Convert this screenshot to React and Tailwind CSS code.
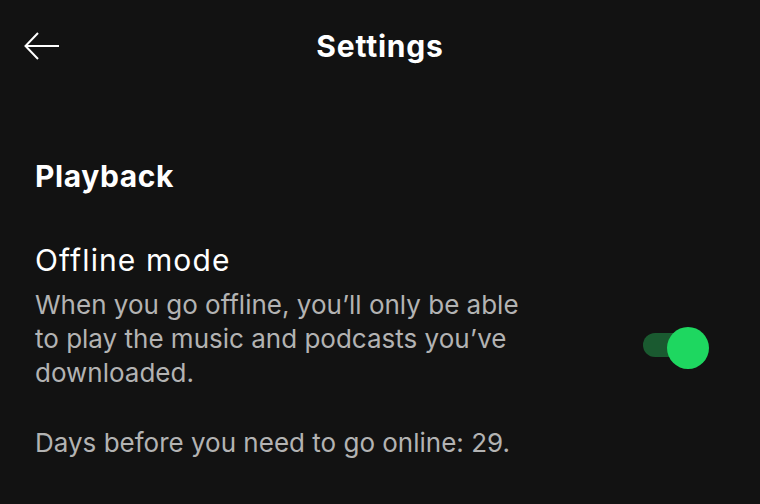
import { useState } from "react";

const BackArrow = () => (
  <svg width="36" height="28" viewBox="0 0 36 28" fill="none" stroke="white" strokeWidth="2">
    <path d="M35 14H2" />
    <path d="M14 1L1.5 14L14 27" />
  </svg>
);

const Toggle = ({ on, onChange }) => (
  <button
    onClick={() => onChange(!on)}
    className="relative w-[68px] h-[44px] -mt-[4px] flex items-center shrink-0"
  >
    <span className="absolute left-[2px] right-[8px] top-[7px] h-[24px] rounded-full bg-[#1a5a30]" />
    <span
      className={
        "absolute top-[1px] w-[42px] h-[42px] rounded-full bg-[#1ed760] " +
        (on ? "right-0" : "left-0")
      }
    />
  </button>
);

export default function App() {
  const [offline, setOffline] = useState(true);

  return (
    <div
      className="w-[760px] h-[504px] bg-[#121212] text-white overflow-hidden"
      style={{ fontFamily: "Inter, 'Noto Sans', sans-serif" }}
    >
      {/* header */}
      <div className="relative h-[92px] flex items-center justify-center">
        <button className="absolute left-[24px] top-[32px]">
          <BackArrow />
        </button>
        <h1 className="text-[30px] leading-[40px] font-bold tracking-[0.8px]">Settings</h1>
      </div>

      <div className="px-[35px] pt-[64px]">
        <h2 className="text-[30px] leading-[40px] font-bold tracking-[0.6px]">Playback</h2>

        <div className="mt-[44px] flex items-center justify-between pr-[16px]">
          <div>
            <div className="text-[30px] leading-[40px] tracking-[1.1px]">Offline mode</div>
            <p className="mt-[8px] w-[505px] text-[26px] leading-[34px] text-[#b3b3b3]">
              When you go offline, you’ll only be able to play the music and podcasts you’ve downloaded.
            </p>
            <p className="mt-[36px] text-[26px] leading-[34px] text-[#b3b3b3]">
              Days before you need to go online: 29.
            </p>
          </div>
          <Toggle on={offline} onChange={setOffline} />
        </div>
      </div>
    </div>
  );
}
